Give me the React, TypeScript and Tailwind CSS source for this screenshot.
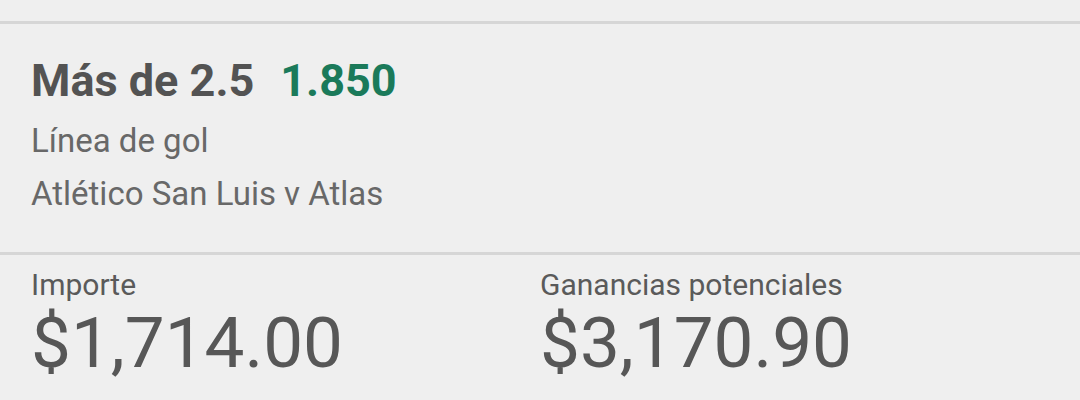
export default function App() {
  return (
    <div className="w-[1080px] h-[400px] overflow-hidden bg-[#efefef] font-['Roboto',_'Liberation_Sans',_sans-serif]">
      <div className="h-[21px]" />
      <div className="border-t-[3px] border-[#d6d6d6] pl-[31px] pt-[30px] pb-[32px]">
        <div className="flex items-baseline gap-[26px] leading-[54px] text-[45px] font-bold">
          <span className="text-[#535353]">Más de 2.5</span>
          <span className="text-[#1b7a5a]">1.850</span>
        </div>
        <div className="mt-[6px] text-[33px] leading-[53px] text-[#686868]">Línea de gol</div>
        <div className="text-[33px] leading-[53px] text-[#686868]">Atlético San Luis v Atlas</div>
      </div>
      <div className="border-t-[3px] border-[#d6d6d6] grid grid-cols-2 px-[31px] pt-[13px]">
        <div>
          <div className="text-[30px] leading-[34px] text-[#5a5a5a]">Importe</div>
          <div className="mt-[6px] text-[71px] leading-[70px] text-[#575757]">$1,714.00</div>
        </div>
        <div>
          <div className="text-[30px] leading-[34px] text-[#5a5a5a]">Ganancias potenciales</div>
          <div className="mt-[6px] text-[71px] leading-[70px] text-[#575757]">$3,170.90</div>
        </div>
      </div>
    </div>
  );
}
